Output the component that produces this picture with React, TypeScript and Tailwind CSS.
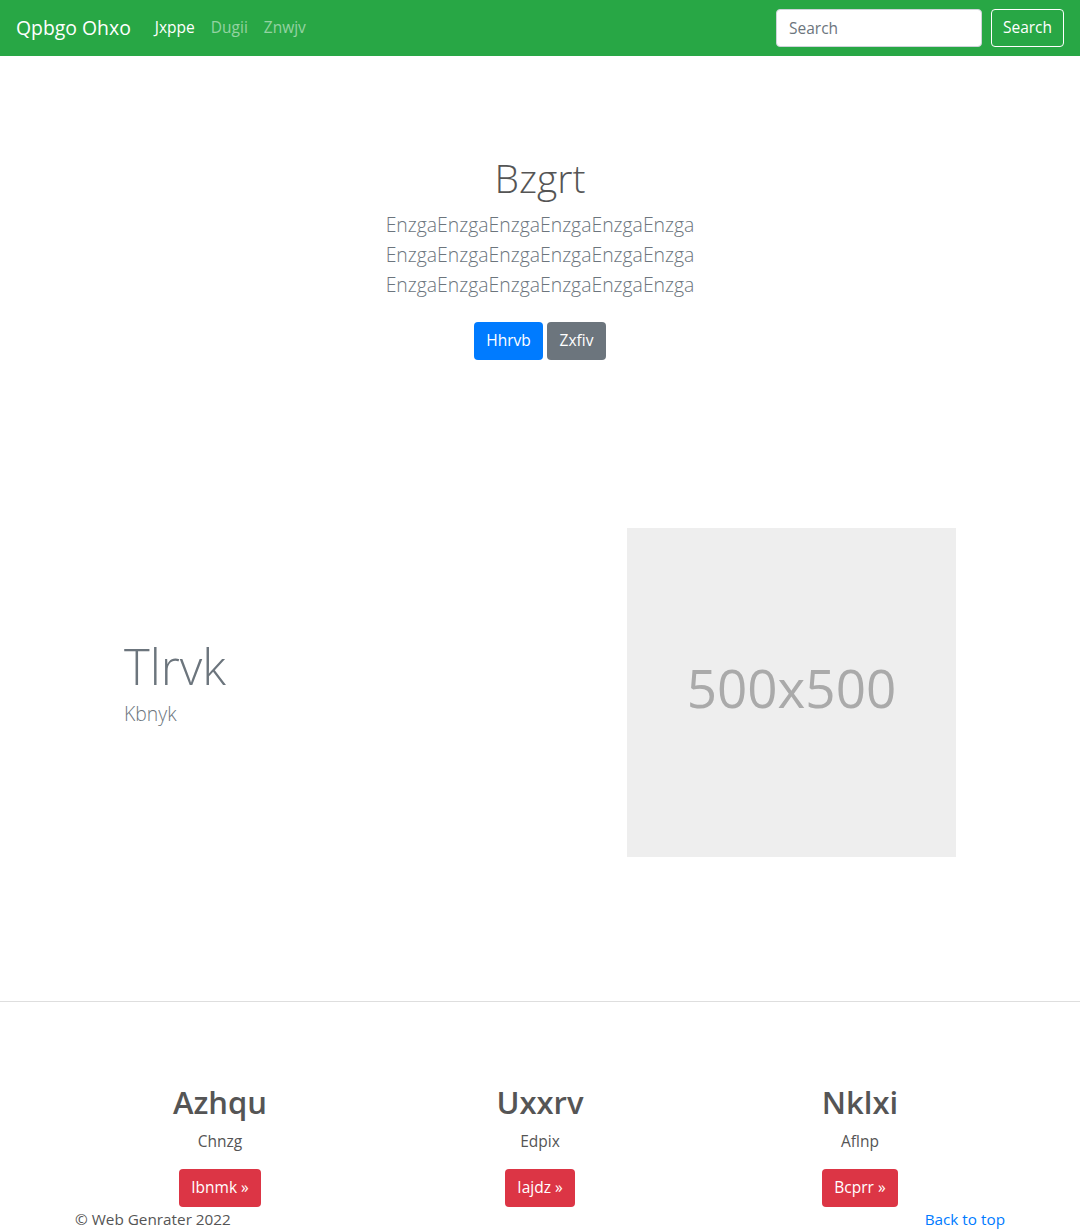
import React from "react";

const FONT = { fontFamily: '"Segoe UI", "Open Sans", "Noto Sans", sans-serif' };

const FEATURES = [
  { title: "Azhqu", text: "Chnzg", cta: "Ibnmk" },
  { title: "Uxxrv", text: "Edpix", cta: "Iajdz" },
  { title: "Nklxi", text: "Aflnp", cta: "Bcprr" },
];

export default function App() {
  return (
    <div className="min-h-[1231px] bg-white text-[#555]" style={FONT}>
      {/* NAVBAR */}
      <nav className="flex h-14 items-center bg-[#28a745] px-4">
        <span className="mr-4 text-[19.4px] leading-[30px] text-white">Qpbgo Ohxo</span>
        <ul className="flex text-[15.5px]">
          <li className="px-2 text-white">Jxppe</li>
          <li className="px-2 text-white/50">Dugii</li>
          <li className="px-2 text-white/50">Znwjv</li>
        </ul>
        <div className="ml-auto flex items-center">
          <input
            placeholder="Search"
            className="mr-[9px] h-[38px] w-[206px] rounded border border-[#ced4da] bg-white px-3 text-[15.5px] text-[#495057] outline-none placeholder:text-[#6c757d]"
          />
          <button className="h-[38px] w-[73px] rounded border border-white text-[15.5px] text-white">Search</button>
        </div>
      </nav>

      {/* HERO */}
      <section className="pt-[98px] text-center">
        <h1 className="text-[39px] font-light leading-[48px] text-[#555]">Bzgrt</h1>
        <p className="mx-auto mt-[8px] w-[320px] text-[19.4px] font-light leading-[30px] text-[#6c757d]">
          EnzgaEnzgaEnzgaEnzgaEnzgaEnzga
          <br />
          EnzgaEnzgaEnzgaEnzgaEnzgaEnzga
          <br />
          EnzgaEnzgaEnzgaEnzgaEnzgaEnzga
        </p>
        <div className="mt-[22px] flex justify-center gap-1">
          <button className="h-[38px] w-[69px] rounded bg-[#007bff] text-[15.5px] text-white">Hhrvb</button>
          <button className="h-[38px] w-[59px] rounded bg-[#6c757d] text-[15.5px] text-white">Zxfiv</button>
        </div>
      </section>

      {/* FEATURE */}
      <section className="mx-auto flex w-[960px] items-start pb-[144px] pt-[168px]">
        <div className="mt-[108px] pl-16">
          <h2 className="text-[49px] font-light leading-[60px] text-[#6c757d]">Tlrvk</h2>
          <p className="mt-[3px] text-[19.4px] font-light leading-[30px] text-[#6c757d]">Kbnyk</p>
        </div>
        <div className="ml-auto mr-16 flex h-[329px] w-[329px] items-center justify-center bg-[#eeeeee] pb-[10px]">
          <span className="text-[53px] leading-none text-[#aaaaaa]">500x500</span>
        </div>
      </section>

      <hr className="border-0 border-t border-[#dedede]" />

      {/* COLUMNS */}
      <section className="mx-auto grid w-[960px] grid-cols-3 pt-[81px] text-center">
        {FEATURES.map((f) => (
          <div key={f.title} className="px-[15px]">
            <h2 className="text-[31px] font-semibold leading-[38px] text-[#555]">{f.title}</h2>
            <p className="mt-2 text-[15.5px] leading-6 text-[#555]">{f.text}</p>
            <button className="mt-4 h-[38px] rounded bg-[#dc3545] px-3 text-[15.5px] text-white">
              {f.cta} &raquo;
            </button>
          </div>
        ))}
      </section>

      <footer className="mx-auto flex w-[960px] justify-between px-[15px] text-[15.3px] leading-6">
        <span className="text-[#555]">&copy; Web Genrater 2022</span>
        <a className="text-[#007bff]">Back to top</a>
      </footer>
    </div>
  );
}
